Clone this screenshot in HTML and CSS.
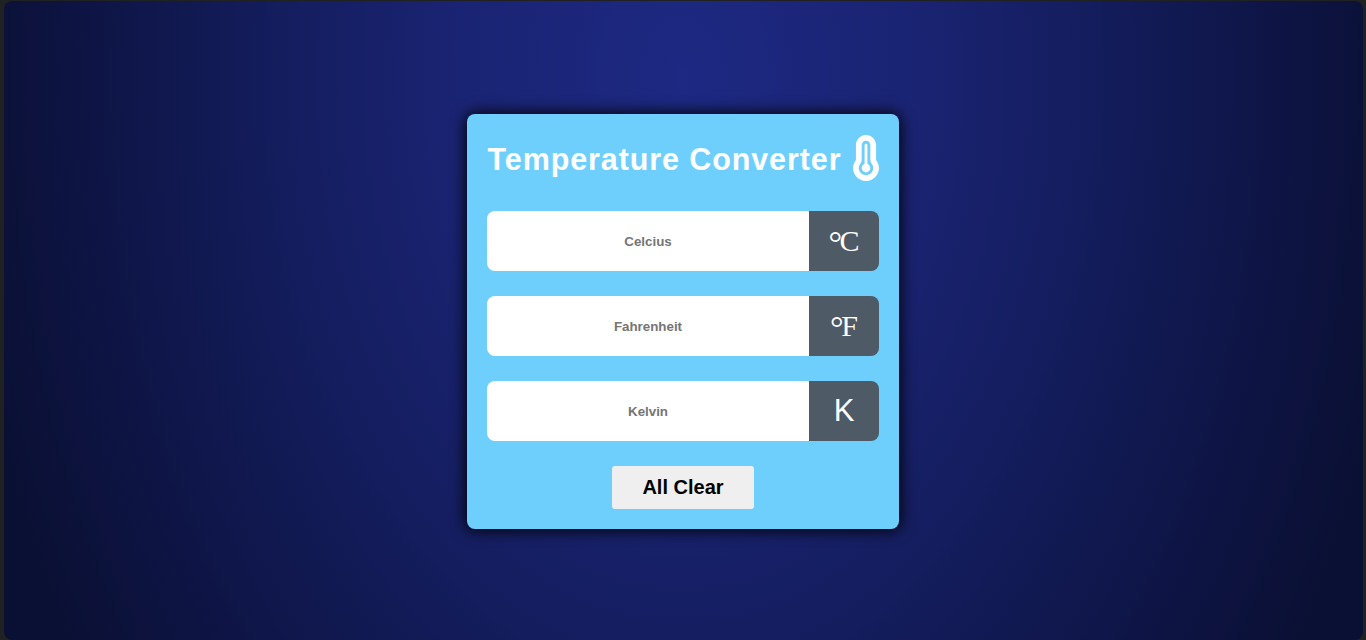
FILE: index.html
```html
<!DOCTYPE html>
<html lang="en">
<head>
<meta charset="utf-8">
<title>Temperature Converter</title>
<link rel="stylesheet" href="styles.css">
</head>
<body>
<main class="page">
  <section class="card">
    <header class="header">
      <h1 class="title">Temperature Converter</h1>
      <svg class="thermometer" viewBox="16 0 288 512" aria-hidden="true"><path d="M160 64c-26.500 0-48 21.500-48 48V276.500c0 17.300-7.100 31.900-15.300 42.500C86.200 332.600 80 349.500 80 368c0 44.200 35.800 80 80 80s80-35.800 80-80c0-18.500-6.200-35.400-16.700-48.900c-8.200-10.600-15.300-25.200-15.300-42.500V112c0-26.500-21.500-48-48-48zM48 112C48 50.200 98.100 0 160 0s112 50.100 112 112V276.500c0 .1 .1 .3 .2 .6c.2 .6 .8 1.600 1.700 2.800c18.900 24.400 30.100 55 30.100 88.100c0 79.500-64.500 144-144 144S16 447.500 16 368c0-33.200 11.200-63.800 30.100-88.100c.9-1.200 1.500-2.200 1.700-2.800c.1-.3 .2-.5 .2-.6V112zM208 368c0 26.500-21.500 48-48 48s-48-21.500-48-48c0-20.900 13.400-38.700 32-45.300V112c0-8.800 7.200-16 16-16s16 7.200 16 16V322.700c18.600 6.600 32 24.400 32 45.300z"/></svg>
    </header>
    <div class="field">
      <input class="input" type="text" placeholder="Celcius">
      <span class="unit unit-serif"><span class="degree">°</span>C</span>
    </div>
    <div class="field">
      <input class="input" type="text" placeholder="Fahrenheit">
      <span class="unit unit-serif"><span class="degree">°</span>F</span>
    </div>
    <div class="field">
      <input class="input" type="text" placeholder="Kelvin">
      <span class="unit unit-sans">K</span>
    </div>
    <button class="clear" type="button">All Clear</button>
  </section>
</main>
</body>
</html>
```

FILE: styles.css
```css
* { box-sizing: border-box; margin: 0; }
body {
  height: 640px;
  padding: 1px 3px 0 4px;
  overflow: hidden;
  background: #202122;
  font-family: Arial, "Liberation Sans", sans-serif;
}
.page {
  display: flex;
  justify-content: center;
  align-items: flex-start;
  height: 639px;
  padding: 113px 1px 0 0;
  border-radius: 8px;
  background: radial-gradient(ellipse 730px 1080px at 50% 12%, #1d2982 0%, #1a2474 30%, #141d5d 56%, #0e1546 80%, #0a1033 100%);
}
.card {
  display: flex;
  flex-direction: column;
  gap: 25px;
  width: 432px;
  height: 415px;
  padding: 20px;
  border-radius: 8px;
  background: #6ecffc;
  box-shadow: 0 0 15px 1px #000;
}
.header {
  display: flex;
  justify-content: space-between;
  align-items: center;
  height: 52px;
}
.title {
  margin: -2px 0 0 0.5px;
  color: #fff;
  font-size: 30.5px;
  line-height: 37px;
  letter-spacing: 0.9px;
  white-space: nowrap;
}
.thermometer {
  flex: none;
  width: 26px;
  height: 46px;
  margin-top: -4px;
  fill: #fff;
}
.field { display: flex; height: 60px; }
.input {
  width: 322px;
  padding: 0;
  border: 0;
  border-radius: 8px 0 0 8px;
  background: #fff;
  text-align: center;
  font: bold 13.333px Arial, "Liberation Sans", sans-serif;
}
.input::placeholder { color: #757575; }
.unit {
  width: 70px;
  border-radius: 0 8px 8px 0;
  background: #4e5a66;
  color: #fff;
  font-size: 30px;
  line-height: 60px;
  text-align: center;
}
.unit-serif { font-family: "Liberation Serif", serif; }
.unit-sans { font-size: 31px; }
.degree {
  margin-right: -2.5px;
  font-size: 34px;
  line-height: 0;
  vertical-align: -3px;
}
.clear {
  align-self: center;
  width: 142px;
  height: 43px;
  padding: 0;
  border: 0;
  border-radius: 3px;
  background: #efefef;
  color: #000;
  font: bold 20px Arial, "Liberation Sans", sans-serif;
}
```
